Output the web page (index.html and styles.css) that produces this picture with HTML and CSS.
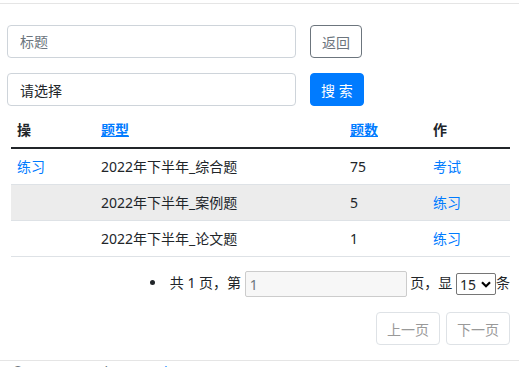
FILE: index.html
```html
<!DOCTYPE html>
<html lang="zh-CN">
<head>
  <meta charset="UTF-8">
  <meta name="viewport" content="width=device-width, initial-scale=1.0">
  <title>题库</title>
  <link rel="stylesheet" href="styles.css">
</head>
<body>
  <div class="topbar"></div>
  <div class="main">
    <div class="search-row">
      <input type="text" class="field" placeholder="标题">
      <button class="btn btn-back">返回</button>
    </div>
    <div class="search-row search-row-last">
      <input type="text" class="field" value="请选择">
      <button class="btn btn-search">搜 索</button>
    </div>
    <table class="list">
      <thead>
        <tr>
          <th class="col-op">操</th>
          <th class="col-type"><a href="#">题型</a></th>
          <th class="col-num"><a href="#">题数</a></th>
          <th class="col-act">作</th>
        </tr>
      </thead>
      <tbody>
        <tr>
          <td><a href="#">练习</a></td>
          <td>2022年下半年_综合题</td>
          <td>75</td>
          <td><a href="#">考试</a></td>
        </tr>
        <tr class="alt">
          <td></td>
          <td>2022年下半年_案例题</td>
          <td>5</td>
          <td><a href="#">练习</a></td>
        </tr>
        <tr>
          <td></td>
          <td>2022年下半年_论文题</td>
          <td>1</td>
          <td><a href="#">练习</a></td>
        </tr>
      </tbody>
    </table>
    <ul class="pager">
      <li>共 1 页，第 <input type="text" class="page-input" value="1"> 页，显 <span class="size-wrap"><select class="page-size"><option>15</option></select><svg class="chev" width="10" height="7" viewBox="0 0 10 7"><path d="M1 1.2 L5 5.2 L9 1.2" fill="none" stroke="#000" stroke-width="2.2"/></svg></span>条</li>
    </ul>
    <div class="pager-btns">
      <button class="btn btn-page" disabled>上一页</button>
      <button class="btn btn-page" disabled>下一页</button>
    </div>
  </div>
  <footer class="footer">© 2022 - YunPhone - <a href="#">Privacy</a></footer>
</body>
</html>
```
FILE: styles.css
```css
body {
  margin: 0;
  font-family: "Noto Sans", "Noto Sans CJK SC", sans-serif;
  font-size: 14px;
  line-height: 20px;
  color: #212529;
  background: #fff;
}
a {
  color: #007bff;
  text-decoration: none;
}
.topbar {
  height: 3px;
  border-bottom: 1px solid #e5e5e5;
}
.main {
  padding: 21px 9px 0 7px;
}
.search-row {
  display: flex;
  align-items: center;
  gap: 14px;
  margin-bottom: 15px;
}
.search-row-last {
  margin-bottom: 0;
}
.field {
  width: 289px;
  height: 33px;
  box-sizing: border-box;
  border: 1px solid #ced4da;
  border-radius: 4px;
  padding: 0 12px;
  font-family: inherit;
  font-size: 14px;
  color: #212529;
}
.field::placeholder {
  color: #6c757d;
}
.btn {
  height: 33px;
  box-sizing: border-box;
  padding: 0 11px;
  border-radius: 4px;
  font-family: inherit;
  font-size: 14px;
  background: #fff;
  cursor: pointer;
}
.btn-back {
  border: 1px solid #6c757d;
  color: #6c757d;
}
.btn-search {
  border: 1px solid #007bff;
  background: #007bff;
  color: #fff;
  padding: 0 10px;
}
.list {
  width: 499px;
  margin: 6px 0 0 4px;
  border-collapse: collapse;
}
.list th, .list td {
  text-align: left;
  padding: 8px 6px;
  line-height: 19px;
  border-bottom: 1px solid #dee2e6;
}
.list th {
  border-bottom: 2px solid #212529;
  font-weight: bold;
}
.list th a {
  text-decoration: underline;
}
.col-op { width: 72px; }
.col-type { width: 237px; }
.col-num { width: 71px; }
.list tr.alt td {
  background: #ececec;
}
.pager {
  margin: 14px 0 0;
  padding: 0;
  list-style: disc inside;
  text-align: right;
}
.page-input {
  width: 162px;
  height: 26px;
  box-sizing: border-box;
  border: 1px solid #ccc;
  border-radius: 2px;
  background: #f7f7f7;
  color: #6c757d;
  padding: 0 4px;
  font-family: inherit;
  font-size: 14px;
  vertical-align: middle;
}
.size-wrap {
  position: relative;
  display: inline-block;
  vertical-align: middle;
}
.page-size {
  appearance: none;
  -webkit-appearance: none;
  width: 40px;
  height: 22px;
  box-sizing: border-box;
  border: 1px solid #767676;
  border-radius: 2px;
  background: #fff;
  padding: 0 0 0 3px;
  font-family: inherit;
  font-size: 14px;
  color: #212529;
  display: block;
}
.chev {
  position: absolute;
  right: 5px;
  top: 8px;
  pointer-events: none;
}
.pager-btns {
  display: flex;
  justify-content: flex-end;
  gap: 6px;
  margin: 15px 0 0;
}
.btn-page {
  width: 64px;
  border: 1px solid #dee2e6;
  color: #999;
  background: #fff;
  padding: 0;
}
.footer {
  margin-top: 15px;
  border-top: 1px solid #e5e5e5;
  padding: 0 12px;
  color: #6c757d;
  line-height: 22px;
}
```
